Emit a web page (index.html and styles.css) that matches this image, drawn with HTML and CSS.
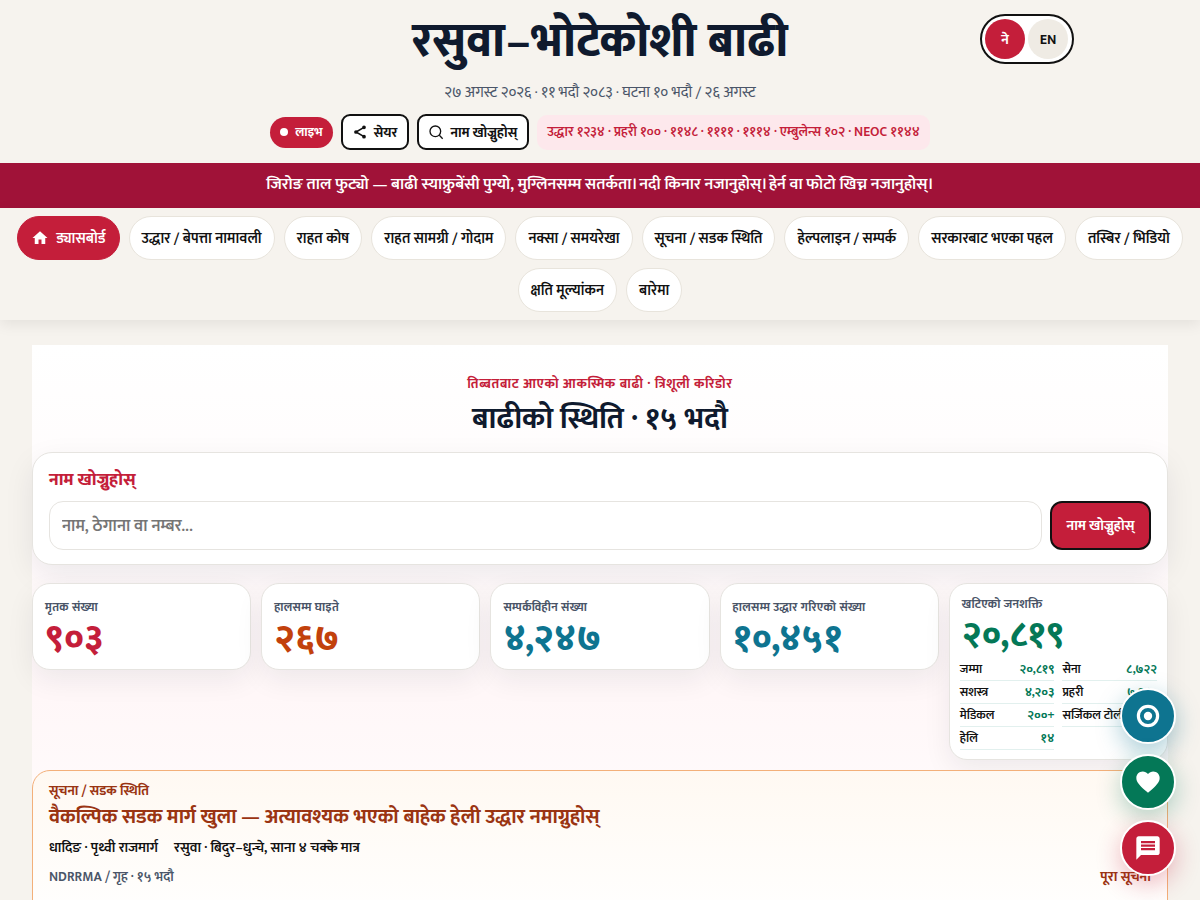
FILE: index.html
```html
<!DOCTYPE html>
<html lang="ne">
<head>
<meta charset="utf-8">
<title>रसुवा–भोटेकोशी बाढी</title>
<link rel="stylesheet" href="styles.css">
</head>
<body>
<header class="top">
  <h1 class="title">रसुवा–भोटेकोशी बाढी</h1>
  <p class="dates">२७ अगस्ट २०२६ · ११ भदौ २०८३ · घटना १० भदौ / २६ अगस्ट</p>
  <div class="tools">
    <span class="live"><i class="dot"></i>लाइभ</span>
    <button class="tool"><svg width="16" height="16" viewBox="0 0 24 24" fill="none" stroke="#111" stroke-width="2.4"><path d="M18 5 6 12l12 7"/><circle cx="18" cy="5" r="1.6" fill="#111"/><circle cx="6" cy="12" r="1.6" fill="#111"/><circle cx="18" cy="19" r="1.6" fill="#111"/></svg>सेयर</button>
    <button class="tool"><svg width="16" height="16" viewBox="0 0 24 24" fill="none" stroke="#111" stroke-width="2"><circle cx="11" cy="11" r="8"/><path d="m17 17 5 5"/></svg>नाम खोज्नुहोस्</button>
    <span class="hotline">उद्धार १२३४ · प्रहरी १०० · ११४८ · ११११ · १११४ · एम्बुलेन्स १०२ · NEOC ११४४</span>
  </div>
  <div class="lang"><span class="lang-btn on">ने</span><span class="lang-btn">EN</span></div>
</header>
<div class="banner">जिरोङ ताल फुट्यो — बाढी स्याफ्रुबेंसी पुग्यो, मुग्लिनसम्म सतर्कता। नदी किनार नजानुहोस्। हेर्न वा फोटो खिच्न नजानुहोस्।</div>
<nav class="nav">
  <a class="chip active"><svg width="18" height="18" viewBox="0 0 24 24" fill="#fff"><path d="M10 20v-6h4v6h5v-8h3L12 3 2 12h3v8z"/></svg>ड्यासबोर्ड</a>
  <a class="chip">उद्धार / बेपत्ता नामावली</a>
  <a class="chip">राहत कोष</a>
  <a class="chip">राहत सामग्री / गोदाम</a>
  <a class="chip">नक्सा / समयरेखा</a>
  <a class="chip">सूचना / सडक स्थिति</a>
  <a class="chip">हेल्पलाइन / सम्पर्क</a>
  <a class="chip">सरकारबाट भएका पहल</a>
  <a class="chip">तस्बिर / भिडियो</a>
  <a class="chip">क्षति मूल्यांकन</a>
  <a class="chip">बारेमा</a>
</nav>
<main class="main">
  <div class="head">
    <p class="eyebrow">तिब्बतबाट आएको आकस्मिक बाढी · त्रिशूली करिडोर</p>
    <h2 class="h2">बाढीको स्थिति · १५ भदौ</h2>
  </div>
  <section class="search">
    <h3 class="search-title">नाम खोज्नुहोस्</h3>
    <div class="search-row">
      <input class="input" placeholder="नाम, ठेगाना वा नम्बर...">
      <button class="search-btn">नाम खोज्नुहोस्</button>
    </div>
  </section>
  <section class="stats">
    <div class="stat"><div class="label">मृतक संख्या</div><div class="num red">९०३</div></div>
    <div class="stat"><div class="label">हालसम्म घाइते</div><div class="num orange">२६७</div></div>
    <div class="stat"><div class="label">सम्पर्कविहीन संख्या</div><div class="num blue">४,२४७</div></div>
    <div class="stat"><div class="label">हालसम्म उद्धार गरिएको संख्या</div><div class="num blue">१०,४५१</div></div>
    <div class="stat forces">
      <div class="label">खटिएको जनशक्ति</div>
      <div class="num green">२०,८१९</div>
      <div class="force-grid">
        <div class="force"><span>जम्मा</span><b>२०,८१९</b></div>
        <div class="force"><span>सेना</span><b>८,७२२</b></div>
        <div class="force"><span>सशस्त्र</span><b>४,२०३</b></div>
        <div class="force"><span>प्रहरी</span><b>७,६८०</b></div>
        <div class="force"><span>मेडिकल</span><b>२००+</b></div>
        <div class="force"><span>सर्जिकल टोली</span><b>६</b></div>
        <div class="force"><span>हेलि</span><b>१४</b></div>
      </div>
    </div>
  </section>
  <section class="notice">
    <div class="notice-kicker">सूचना / सडक स्थिति</div>
    <h3 class="notice-title">वैकल्पिक सडक मार्ग खुला — अत्यावश्यक भएको बाहेक हेली उद्धार नमाग्नुहोस्</h3>
    <div class="routes"><span>धादिङ · पृथ्वी राजमार्ग</span><span>रसुवा · बिदुर–धुन्चे, साना ४ चक्के मात्र</span></div>
    <div class="notice-foot"><span class="src">NDRRMA / गृह · १५ भदौ</span><a class="more">पूरा सूचना</a></div>
  </section>
</main>
<div class="fabs">
  <a class="fab fab-blue"><svg width="24" height="24" viewBox="0 0 24 24" fill="none" stroke="#fff" stroke-width="3.2"><circle cx="12" cy="12" r="9.6"/><circle cx="12" cy="12" r="4.2" fill="#fff" stroke="none"/></svg></a>
  <a class="fab fab-green"><svg width="28" height="28" viewBox="0 0 24 24" fill="#fff"><path d="M12 21.300 10.500 20C5.400 15.400 2 12.300 2 8.500 2 5.400 4.400 3 7.500 3c1.700 0 3.400.8 4.500 2.100C13.100 3.800 14.800 3 16.500 3 19.600 3 22 5.400 22 8.500c0 3.800-3.400 6.900-8.500 11.500z"/></svg></a>
  <a class="fab fab-red"><svg width="28" height="28" viewBox="0 0 24 24" fill="#fff"><path d="M20 2H4c-1.100 0-2 .9-2 2v18l4-4h14c1.100 0 2-.9 2-2V4c0-1.100-.9-2-2-2zM6 9h12v2H6zm12 5H6v-2h12zm0-6H6V6h12z"/></svg></a>
</div>
</body>
</html>
```

FILE: styles.css
```css
* { box-sizing: border-box; }
html, body { margin: 0; padding: 0; }
body {
  background: #f6f3ee;
  color: #0f1a2e;
  font-family: "Mukta", "Noto Sans", sans-serif;
}
.top { position: relative; height: 163px; padding-top: 12px; text-align: center; }
.title { margin: 0; font-size: 47.4px; line-height: 60px; font-weight: 800; color: #0f1a2e; }
.dates { margin: 9px 0 0; font-size: 15.3px; line-height: 24px; color: #4a5568; }
.tools { display: flex; justify-content: center; align-items: center; gap: 8px; margin-top: 9px; }
.live {
  display: inline-flex; align-items: center; gap: 7px; height: 31px; padding: 0 10px;
  background: #c41e3a; color: #fff; border-radius: 16px; font-size: 12.8px; font-weight: 700;
}
.dot { width: 8px; height: 8px; border-radius: 50%; background: #fff; }
.tool {
  display: inline-flex; align-items: center; gap: 6px; height: 36px; padding: 0 10px 0 9px;
  background: #fff; border: 2px solid #111; border-radius: 9px; color: #111;
  font: 700 13.8px "Mukta", sans-serif;
}
.hotline {
  display: inline-flex; align-items: center; height: 35px; padding: 0 10px;
  background: #fde8ec; color: #c41e3a; border-radius: 10px; font-size: 13.55px; font-weight: 600;
}
.lang {
  position: absolute; left: 980px; top: 14px; display: flex; gap: 3px; width: 94px; height: 50px; padding: 3px;
  background: #fff; border: 2px solid #111; border-radius: 25px;
}
.lang-btn {
  width: 40px; height: 40px; border-radius: 50%; background: #efebe4; color: #111;
  display: flex; align-items: center; justify-content: center; font-size: 14px; font-weight: 700;
}
.lang-btn.on { background: #c41e3a; color: #fff; }
.banner {
  height: 45px; background: #a01238; color: #fff; text-align: center;
  font-size: 16.3px; font-weight: 600; line-height: 44px;
}
.nav {
  display: flex; flex-wrap: wrap; justify-content: center; gap: 8px 9px; height: 112px; padding: 8px 14px;
  background: #f6f3ee; box-shadow: 0 4px 14px rgba(0,0,0,.08); position: relative;
}
.chip {
  display: inline-flex; align-items: center; gap: 7px; height: 44px; padding: 0 12px;
  background: #fff; border: 1px solid #e8e4dc; border-radius: 22px;
  font-size: 14.88px; font-weight: 600; color: #111;
}
.chip.active { background: #c41e3a; border-color: #c41e3a; color: #fff; padding: 0 13px; font-size: 15px; }
.main {
  margin: 25px 32px 0;
  background: linear-gradient(180deg, #fff 0, #fff7f8 60%, #fff 100%);
}
.head { padding-top: 27px; height: 107px; text-align: center; }
.eyebrow { margin: 0; font-size: 13.6px; line-height: 24px; font-weight: 700; letter-spacing: .6px; color: #c41e3a; }
.h2 { margin: 0; font-size: 30px; line-height: 46px; font-weight: 700; color: #0f1a2e; }
.search {
  height: 113px; padding: 13px 16px; background: #fff; border: 1px solid #e6e4e0; border-radius: 20px;
  box-shadow: 0 10px 30px rgba(15,26,46,.08);
}
.search-title { margin: 0; font-size: 17.6px; line-height: 28px; font-weight: 800; color: #c41e3a; }
.search-row { display: flex; gap: 8px; margin-top: 7px; }
.input {
  flex: 1; height: 49px; padding: 0 12px; background: #fff; border: 1px solid #e6e4e0; border-radius: 14px;
  font: 600 16.8px "Mukta", sans-serif;
}
.input::placeholder { color: #757575; }
.search-btn {
  height: 49px; width: 101px; padding: 0; background: #c41e3a; color: #fff; border: 2px solid #111; border-radius: 12px;
  font: 700 14px "Mukta", sans-serif;
}
.stats {
  display: grid; grid-template-columns: repeat(5, 1fr); gap: 10px; align-items: start; margin-top: 18px;
}
.stat {
  height: 87px; padding: 13px 12px; background: #fff; border: 1px solid #e6e4e0; border-radius: 18px;
  box-shadow: 0 10px 28px rgba(15,26,46,.07);
}
.label { font-size: 12px; line-height: 20px; font-weight: 700; letter-spacing: .3px; color: #4a5568; }
.num { font-size: 36.8px; line-height: 44px; font-weight: 800; }
.red { color: #c41e3a; }
.orange { color: #c2410c; }
.blue { color: #0e7490; }
.green { color: #047857; }
.forces { height: 177px; padding: 10px; }
.forces .label { padding-left: 2px; }
.forces .num { padding-left: 2px; font-size: 35.6px; }
.force-grid { display: grid; grid-template-columns: 1fr 1fr; column-gap: 8px; }
.force {
  display: flex; justify-content: space-between; align-items: center; height: 23px;
  border-bottom: 1px solid #e2f0ee; font-size: 12.4px; font-weight: 600; color: #111;
}
.force b { color: #047857; font-weight: 700; }
.notice {
  position: relative; margin-top: 10px; height: 160px; padding: 10px 16px;
  background: linear-gradient(180deg, #fff9f2, #fff); border: 1px solid #f3b07a; border-radius: 18px;
}
.notice-kicker { font-size: 13.6px; line-height: 20px; font-weight: 700; color: #9a3412; }
.notice-title { margin: 1px 0 0; font-size: 20.3px; line-height: 30px; font-weight: 700; color: #9a3412; }
.routes { display: flex; gap: 16px; margin-top: 5px; font-size: 14.2px; line-height: 22px; font-weight: 600; color: #111; }
.notice-foot { display: flex; justify-content: space-between; margin-top: 7px; font-size: 13.6px; line-height: 22px; }
.src { font-weight: 600; color: #4a5568; }
.more { font-size: 14px; font-weight: 700; color: #9a3412; }
.fabs { position: fixed; right: 24px; bottom: 24px; display: flex; flex-direction: column; gap: 10px; }
.fab {
  width: 56px; height: 56px; border-radius: 50%; border: 2px solid #fff;
  display: flex; align-items: center; justify-content: center;
}
.fab-blue { background: #0e7490; box-shadow: 0 8px 24px rgba(14,116,144,.35); }
.fab-green { background: #047857; box-shadow: 0 8px 24px rgba(4,120,87,.3); }
.fab-red { background: #c41e3a; box-shadow: 0 8px 24px rgba(196,30,58,.3); }
```
